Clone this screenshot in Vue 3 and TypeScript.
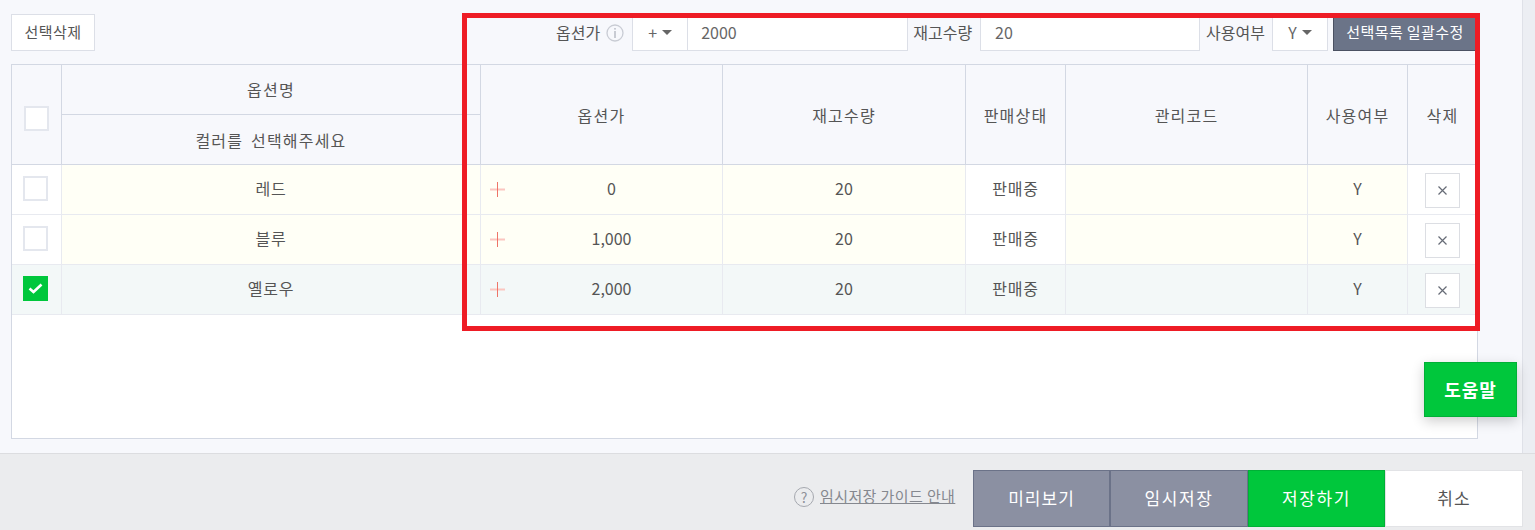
<script setup lang="ts">
interface OptionRow {
  name: string
  price: string
  checked: boolean
}

const rows: OptionRow[] = [
  { name: '레드', price: '0', checked: false },
  { name: '블루', price: '1,000', checked: false },
  { name: '옐로우', price: '2,000', checked: true },
]
</script>

<template>
  <div class="page">
    <div class="main">
      <div class="content">
        <div class="toolbar">
          <button class="btn-plain">선택삭제</button>
          <div class="bulk">
            <span class="label">옵션가</span>
            <svg class="info" width="18" height="18" viewBox="0 0 18 18">
              <circle cx="9" cy="9" r="8" fill="none" stroke="#c9ccd4" stroke-width="1.3" />
              <rect x="8.3" y="4" width="1.4" height="1.6" fill="#b4b8c2" />
              <rect x="8.3" y="7" width="1.4" height="7" fill="#b4b8c2" />
            </svg>
            <div class="select sign">+<i class="caret"></i></div>
            <div class="input price">2000</div>
            <span class="label">재고수량</span>
            <div class="input qty">20</div>
            <span class="label">사용여부</span>
            <div class="select use">Y<i class="caret"></i></div>
            <button class="btn-apply">선택목록 일괄수정</button>
          </div>
        </div>

        <div class="table-box">
          <table>
            <colgroup>
              <col style="width: 50px" />
              <col style="width: 419px" />
              <col style="width: 242px" />
              <col style="width: 243px" />
              <col style="width: 100px" />
              <col style="width: 242px" />
              <col style="width: 100px" />
              <col style="width: 69px" />
            </colgroup>
            <thead>
              <tr>
                <th rowspan="2" class="head-check-cell"><span class="check"></span></th>
                <th class="name-head">옵션명</th>
                <th rowspan="2">옵션가</th>
                <th rowspan="2">재고수량</th>
                <th rowspan="2">판매상태</th>
                <th rowspan="2">관리코드</th>
                <th rowspan="2">사용여부</th>
                <th rowspan="2" class="last">삭제</th>
              </tr>
              <tr>
                <th>컬러를 선택해주세요</th>
              </tr>
            </thead>
            <tbody>
              <tr v-for="row in rows" :key="row.name" :class="{ selected: row.checked }">
                <td class="plain">
                  <span class="check row-check" :class="{ on: row.checked }">
                    <svg v-if="row.checked" width="15" height="11" viewBox="0 0 15 11">
                      <path d="M1.5 5.5 5.5 9 13.5 1.5" fill="none" stroke="#fff" stroke-width="2.6" />
                    </svg>
                  </span>
                </td>
                <td class="ko">{{ row.name }}</td>
                <td class="price-cell">
                  <svg class="plus" width="15" height="15" viewBox="0 0 15 15">
                    <rect x="0" y="6.5" width="15" height="2" fill="#fbc6c0" />
                    <rect x="7" y="0" width="1" height="15" fill="#ee7468" />
                  </svg>
                  {{ row.price }}
                </td>
                <td>20</td>
                <td class="plain ko">판매중</td>
                <td></td>
                <td>Y</td>
                <td class="plain last">
                  <button class="btn-del">
                    <svg width="11" height="11" viewBox="0 0 11 11">
                      <path d="M1.5 1.5 9.5 9.5M9.5 1.5 1.5 9.5" stroke="#666b76" stroke-width="1.2" />
                    </svg>
                  </button>
                </td>
              </tr>
            </tbody>
          </table>
        </div>
      </div>
      <div class="track"></div>
    </div>

    <div class="footer">
      <span class="guide-icon">?</span>
      <a class="guide">임시저장 가이드 안내</a>
      <div class="actions">
        <button class="act gray">미리보기</button>
        <button class="act gray wide roomy">임시저장</button>
        <button class="act green roomy">저장하기</button>
        <button class="act white wide">취소</button>
      </div>
    </div>

    <button class="help">도움말</button>
    <div class="highlight"></div>
  </div>
</template>

<style>
html,
body {
  margin: 0;
  overflow: hidden;
}
</style>

<style scoped>
.page {
  position: relative;
  width: 1535px;
  height: 530px;
  display: flex;
  flex-direction: column;
  overflow: hidden;
  font-family: "Noto Sans CJK KR", "Noto Sans", sans-serif;
  font-size: 16px;
  color: #555;
  background: #f7f8fc;
}

button {
  font: inherit;
  cursor: pointer;
}

.main {
  height: 453px;
  display: flex;
}

.content {
  width: 1522px;
  padding: 14px 0 0 11px;
  box-sizing: border-box;
}

.track {
  flex: 1;
  background: #eceef3;
  border-left: 1px solid #dfe1e8;
}

.toolbar {
  height: 37px;
  display: flex;
  justify-content: space-between;
  margin-bottom: 13px;
  width: 1465px;
}

.btn-plain {
  width: 84px;
  height: 37px;
  padding: 0 0 2px;
  background: #fff;
  border: 1px solid #dcdfe7;
  color: #555;
  font-size: 15px;
  letter-spacing: 0.4px;
}

.bulk {
  display: flex;
  align-items: center;
}

.label {
  padding-bottom: 2px;
  color: #555;
  font-size: 16px;
}

.info {
  margin: 0 8px 0 6px;
}

.select,
.input {
  height: 37px;
  box-sizing: border-box;
  padding-bottom: 2px;
  background: #fff;
  border: 1px solid #dcdfe7;
  display: flex;
  align-items: center;
  color: #666;
  font-size: 16px;
}

.sign {
  width: 56px;
  justify-content: center;
}

.price {
  width: 220px;
  border-left: none;
  padding-left: 13px;
  margin-right: 5px;
}

.qty {
  width: 220px;
  padding-left: 14px;
  margin: 0 6px 0 8px;
}

.use {
  width: 56px;
  margin-left: 7px;
  justify-content: center;
}

.caret {
  width: 0;
  height: 0;
  margin: 2px 0 0 5px;
  border-left: 5px solid transparent;
  border-right: 5px solid transparent;
  border-top: 5px solid #666;
}

.btn-apply {
  width: 143px;
  height: 37px;
  margin-left: 5px;
  padding: 0 0 2px;
  background: #6b7488;
  border: none;
  border-left: 1px solid #4b5162;
  border-bottom: 1px solid #4b5162;
  color: #fff;
  font-size: 15px;
  letter-spacing: 0.4px;
  white-space: nowrap;
}

.table-box {
  width: 1467px;
  height: 375px;
  box-sizing: border-box;
  background: #fff;
  border: 1px solid #d3d8e3;
}

table {
  width: 1465px;
  table-layout: fixed;
  border-collapse: separate;
  border-spacing: 0;
}

th,
td {
  height: 50px;
  padding: 0;
  box-sizing: border-box;
  text-align: center;
  font-weight: 400;
  font-size: 16px;
  color: #555;
}

th {
  background: #f7f8fc;
  border-right: 1px solid #d3d8e3;
  border-bottom: 1px solid #d3d8e3;
  letter-spacing: 1.2px;
  word-spacing: 3px;
}

.name-head {
  padding-bottom: 2px;
}

td {
  padding-bottom: 4px;
  background: #fffff6;
  border-right: 1px solid #e8eaf0;
  border-bottom: 1px solid #e8eaf0;
}

td.ko {
  letter-spacing: 0.7px;
}

td.plain {
  background: #fff;
}

tr.selected td {
  background: #f3f8f8;
}

.last {
  border-right: none;
}

.price-cell {
  position: relative;
  padding-left: 20px;
}

.plus {
  position: absolute;
  left: 9px;
  top: 17px;
}

.check {
  display: flex;
  align-items: center;
  justify-content: center;
  width: 25px;
  height: 25px;
  margin-left: 12px;
  box-sizing: border-box;
  background: #fff;
  border: 2px solid #e4e7ee;
}

.head-check-cell {
  padding-top: 8px;
}

.row-check {
  margin: 2px 0 0 11px;
}

.check.on {
  background: #00c73c;
  border-color: #00c73c;
}

.btn-del {
  display: flex;
  align-items: center;
  justify-content: center;
  width: 35px;
  height: 35px;
  margin-left: 17px;
  margin-top: 6px;
  padding: 0;
  background: #fff;
  border: 1px solid #dcdee3;
}

.footer {
  flex: 1;
  display: flex;
  align-items: flex-start;
  box-sizing: border-box;
  padding-top: 16px;
  background: #ebecee;
  border-top: 1px solid #dcdde0;
}

.guide-icon {
  display: flex;
  align-items: center;
  justify-content: center;
  width: 20px;
  height: 20px;
  margin: 17px 6px 0 794px;
  box-sizing: border-box;
  border: 1px solid #a5a8af;
  border-radius: 50%;
  color: #8f9299;
  font-size: 14px;
  line-height: 18px;
}

.guide {
  margin-top: 16px;
  width: 135px;
  color: #85888f;
  font-size: 15px;
  letter-spacing: 0.4px;
  line-height: 20px;
  text-decoration: underline;
  white-space: nowrap;
}

.actions {
  display: flex;
  margin-left: 18px;
}

.act {
  width: 137px;
  height: 57px;
  padding: 0 0 3px;
  font-size: 17px;
  letter-spacing: 1px;
  box-sizing: border-box;
}

.wide {
  width: 138px;
}

.roomy {
  letter-spacing: 1.6px;
}

.gray {
  background: #8b90a2;
  border: 1px solid #6b7288;
  color: #fff;
}

.green {
  background: #00c73c;
  border: 1px solid #00b036;
  color: #fff;
}

.white {
  background: #fff;
  border: 1px solid #e2e3e6;
  color: #555;
}

.help {
  position: absolute;
  left: 1424px;
  top: 362px;
  width: 93px;
  height: 55px;
  padding: 0 0 2px;
  background: #00c73c;
  border: 1px solid #00b036;
  color: #fff;
  font-size: 18px;
  font-weight: 700;
  letter-spacing: 1px;
  box-shadow: 0 4px 12px rgba(0, 0, 0, 0.2);
}

.highlight {
  position: absolute;
  left: 462px;
  top: 13px;
  width: 1018px;
  height: 318px;
  box-sizing: border-box;
  border: 5px solid #ee1c25;
  pointer-events: none;
}
</style>
